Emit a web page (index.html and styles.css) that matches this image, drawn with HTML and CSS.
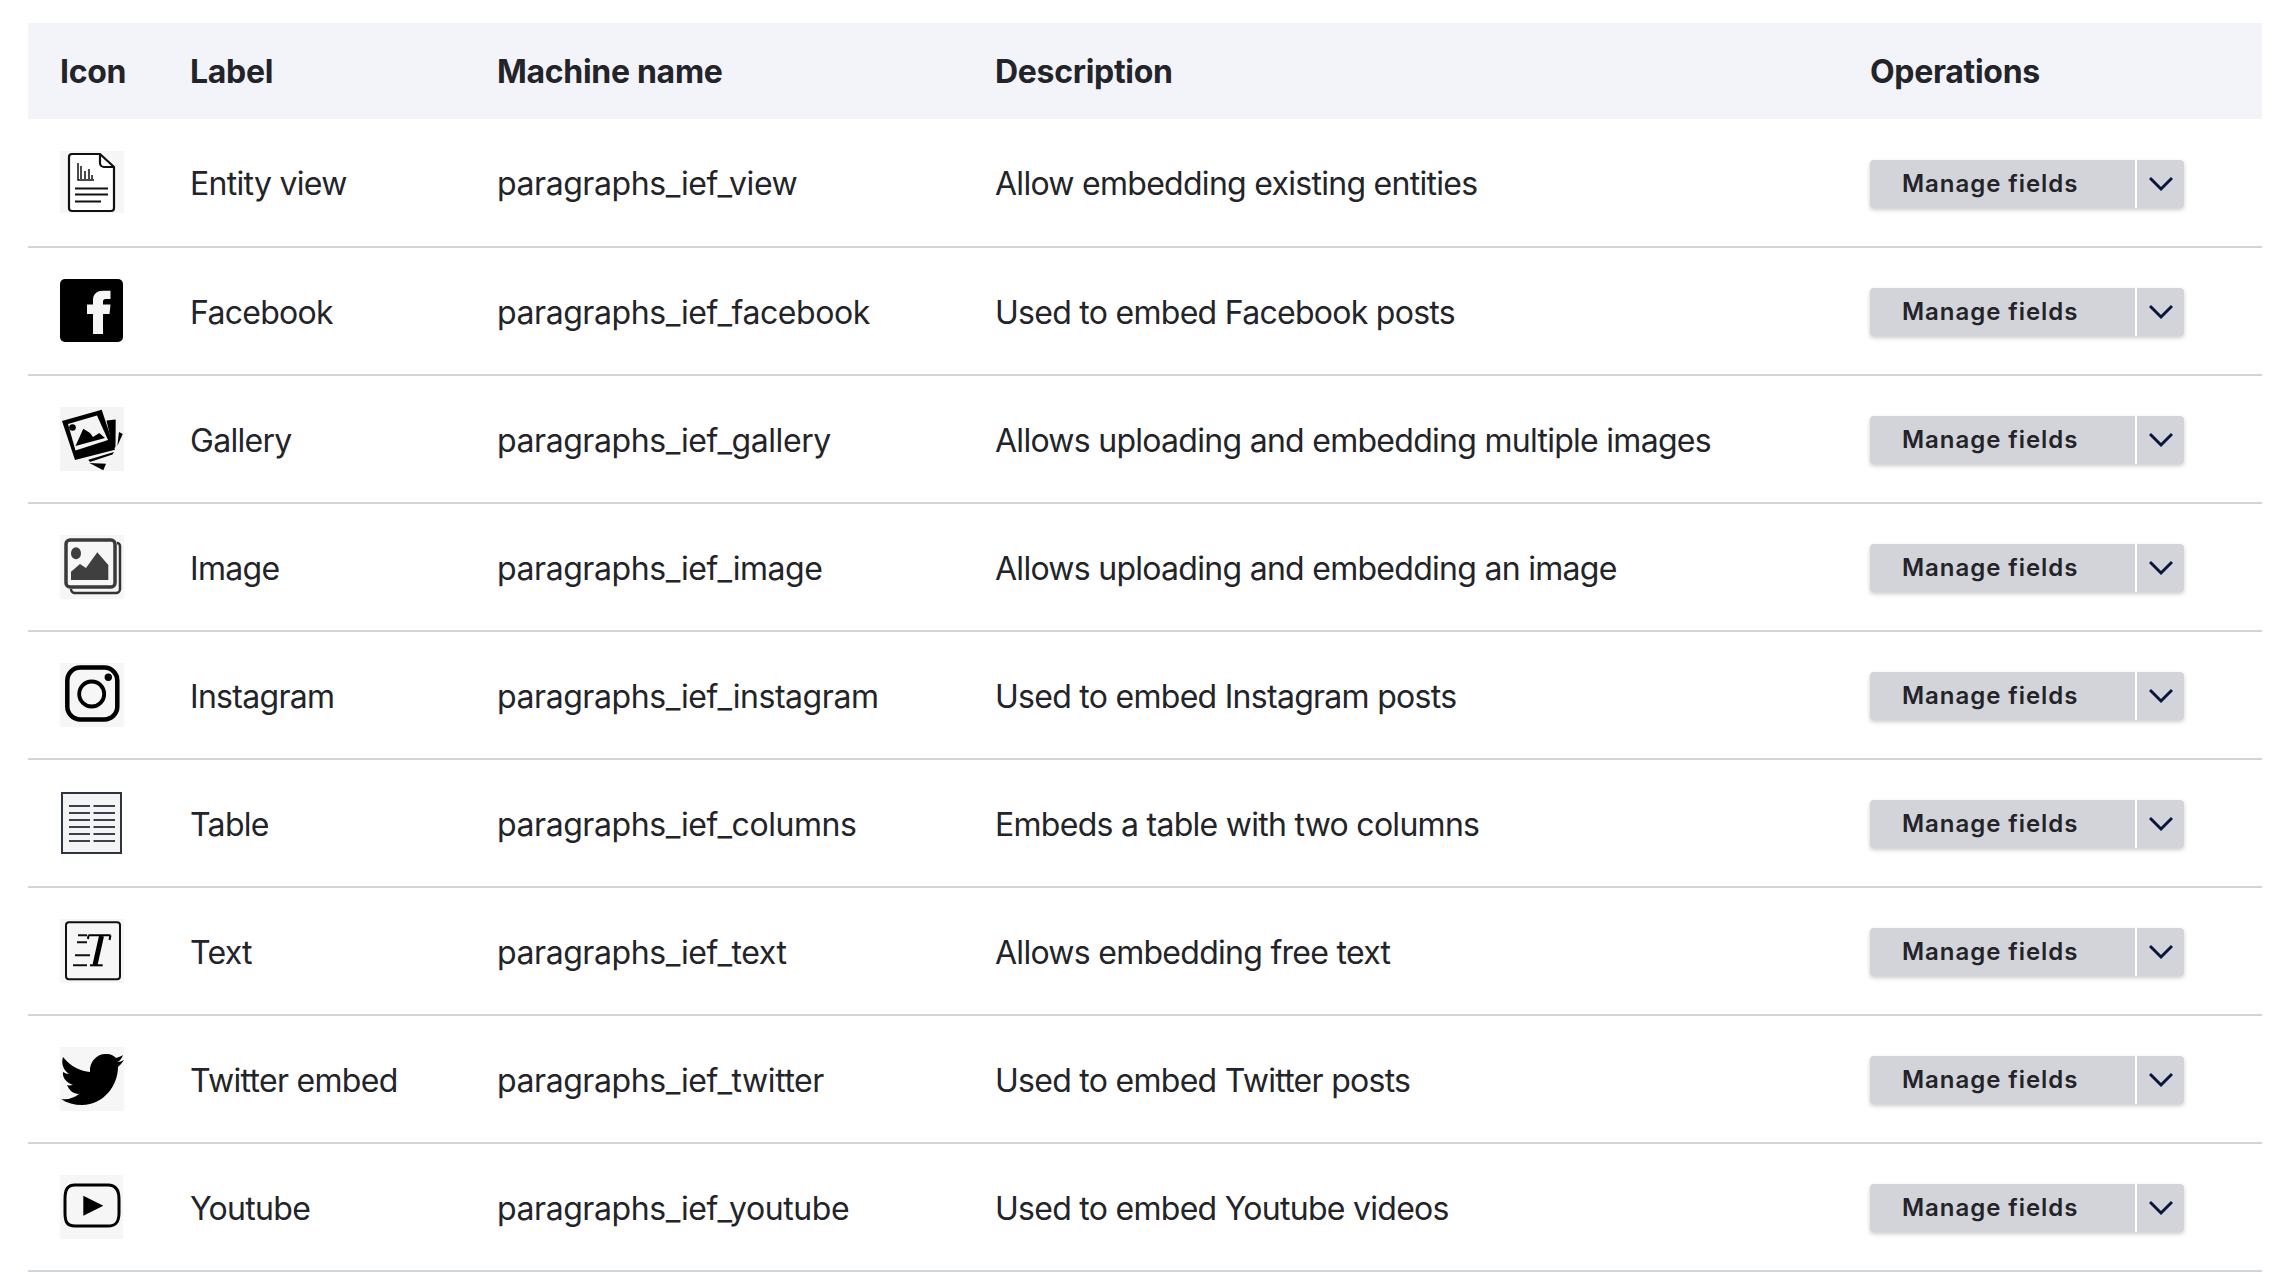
FILE: index.html
```html
<!DOCTYPE html>
<html lang="en">
<head>
<meta charset="utf-8">
<title>Paragraph types</title>
<link rel="stylesheet" href="styles.css">
</head>
<body>
<table class="types">
<thead>
<tr><th class="c-icon">Icon</th><th class="c-label">Label</th><th class="c-machine">Machine name</th><th class="c-desc">Description</th><th class="c-ops">Operations</th></tr>
</thead>
<tbody>
<tr>
<td class="c-icon"><svg class="ico" viewBox="0 0 64 64"><rect width="64" height="62" fill="#f6f6f6"/><path d="M12 3H40L54 16V57a3 3 0 0 1-3 3H12a3 3 0 0 1-3-3V6a3 3 0 0 1 3-3Z" fill="#fff" stroke="#111" stroke-width="2.200"/><path d="M40 3V12a4 4 0 0 0 4 4H54" fill="none" stroke="#111" stroke-width="2.200"/><path d="M18 12V29H34M21 15V28M25 20V28M29 18V28M32 24V28" fill="none" stroke="#111" stroke-width="1.500"/><path d="M15 37.500H48M15 43.500H48M15 50.500H41" stroke="#111" stroke-width="2"/></svg></td>
<td class="t-label">Entity view</td><td class="t-machine">paragraphs_ief_view</td><td class="t-desc">Allow embedding existing entities</td>
<td class="c-ops"><div class="btn"><a class="btn-main">Manage fields</a><span class="btn-more"><svg class="chev" viewBox="0 0 24 16"><path d="M1 2L12 13L23 2" fill="none" stroke="#0a1540" stroke-width="3"/></svg></span></div></td>
</tr>
<tr>
<td class="c-icon"><svg class="ico" viewBox="0 0 64 64"><rect width="63" height="63" rx="5" fill="#000"/><path d="M33 55V35H27V25.500H33V21C33 15 37 11.700 43 11.700H50.500V20H45.500C44 20 43 21 43 22.500V25.500H50.500L49.500 35H43V55Z" fill="#f6f6f6"/></svg></td>
<td class="t-label">Facebook</td><td class="t-machine">paragraphs_ief_facebook</td><td class="t-desc">Used to embed Facebook posts</td>
<td class="c-ops"><div class="btn"><a class="btn-main">Manage fields</a><span class="btn-more"><svg class="chev" viewBox="0 0 24 16"><path d="M1 2L12 13L23 2" fill="none" stroke="#0a1540" stroke-width="3"/></svg></span></div></td>
</tr>
<tr>
<td class="c-icon"><svg class="ico" viewBox="0 0 64 64"><rect width="64" height="64" fill="#f4f4f4"/><path d="M46.500 13.500L55.700 12.500L55.500 40L53 42Z" fill="#000"/><path d="M59 25L62.700 27L57.300 39Z" fill="#000"/><path d="M28.300 52.700L54 45L52.500 47.500L30 55Z" fill="#000"/><path d="M29.300 56L46 56.700L43.300 63.300Z" fill="#000"/><path d="M2 14L41.700 2.700L55 42.700L15 53Z" fill="#000"/><path d="M8 17L37 8.500L48 33L15.500 43.500Z" fill="#f4f4f4"/><path d="M15.500 39L23.300 21.700L30 26L33 30L39.300 26L45 31Z" fill="#000"/><circle cx="12.500" cy="20.500" r="3.300" fill="#000"/></svg></td>
<td class="t-label">Gallery</td><td class="t-machine">paragraphs_ief_gallery</td><td class="t-desc">Allows uploading and embedding multiple images</td>
<td class="c-ops"><div class="btn"><a class="btn-main">Manage fields</a><span class="btn-more"><svg class="chev" viewBox="0 0 24 16"><path d="M1 2L12 13L23 2" fill="none" stroke="#0a1540" stroke-width="3"/></svg></span></div></td>
</tr>
<tr>
<td class="c-icon"><svg class="ico" viewBox="0 0 64 64"><rect width="64" height="64" fill="#f6f6f6"/><path d="M57 8a3 3 0 0 1 3 3V54a4 4 0 0 1-4 4H15a4 4 0 0 1-4-4" fill="none" stroke="#333" stroke-width="2.500"/><rect x="6" y="5" width="49" height="47" rx="4" fill="#f6f6f6" stroke="#3a3a3a" stroke-width="3.500"/><path d="M11 45V36.700L20 29L26 33L37.300 17.300L48.300 30V45Z" fill="#3f3f3f"/><ellipse cx="16" cy="18.300" rx="5" ry="6" fill="#3f3f3f"/></svg></td>
<td class="t-label">Image</td><td class="t-machine">paragraphs_ief_image</td><td class="t-desc">Allows uploading and embedding an image</td>
<td class="c-ops"><div class="btn"><a class="btn-main">Manage fields</a><span class="btn-more"><svg class="chev" viewBox="0 0 24 16"><path d="M1 2L12 13L23 2" fill="none" stroke="#0a1540" stroke-width="3"/></svg></span></div></td>
</tr>
<tr>
<td class="c-icon"><svg class="ico" viewBox="0 0 64 64"><rect width="64" height="64" fill="#f6f6f6"/><rect x="7.300" y="4.500" width="50" height="52" rx="13" fill="none" stroke="#000" stroke-width="4.500"/><circle cx="31.700" cy="31" r="12.500" fill="none" stroke="#000" stroke-width="3.800"/><circle cx="48.300" cy="14.300" r="3.700" fill="#000"/></svg></td>
<td class="t-label">Instagram</td><td class="t-machine">paragraphs_ief_instagram</td><td class="t-desc">Used to embed Instagram posts</td>
<td class="c-ops"><div class="btn"><a class="btn-main">Manage fields</a><span class="btn-more"><svg class="chev" viewBox="0 0 24 16"><path d="M1 2L12 13L23 2" fill="none" stroke="#0a1540" stroke-width="3"/></svg></span></div></td>
</tr>
<tr>
<td class="c-icon"><svg class="ico" viewBox="0 0 64 64"><rect x="2" y="2" width="59" height="60" fill="#f4f4f4" stroke="#2f3442" stroke-width="2"/><path d="M9 15H30M33.500 15H55M9 22H30M33.500 22H55M9 29H30M33.500 29H55M9 36H30M33.500 36H55M9 43H30M33.500 43H55M9 50H30M33.500 50H55" stroke="#3c4150" stroke-width="2"/></svg></td>
<td class="t-label">Table</td><td class="t-machine">paragraphs_ief_columns</td><td class="t-desc">Embeds a table with two columns</td>
<td class="c-ops"><div class="btn"><a class="btn-main">Manage fields</a><span class="btn-more"><svg class="chev" viewBox="0 0 24 16"><path d="M1 2L12 13L23 2" fill="none" stroke="#0a1540" stroke-width="3"/></svg></span></div></td>
</tr>
<tr>
<td class="c-icon"><svg class="ico" viewBox="0 0 64 64"><rect width="64" height="64" fill="#f6f6f6"/><rect x="6" y="3.300" width="54" height="57" rx="3" fill="#f6f6f6" stroke="#111" stroke-width="2"/><path d="M28.500 16.300H50.500M28.500 16.300L28 20M50.500 16.300L49.500 21" fill="none" stroke="#000" stroke-width="2"/><path d="M41.500 17L35 46" fill="none" stroke="#000" stroke-width="5"/><path d="M30 46.300H42.700" stroke="#000" stroke-width="2"/><path d="M18 16.300H27M17 23.300H27M15 36.300H30M13 46.300H27" stroke="#111" stroke-width="2"/></svg></td>
<td class="t-label">Text</td><td class="t-machine">paragraphs_ief_text</td><td class="t-desc">Allows embedding free text</td>
<td class="c-ops"><div class="btn"><a class="btn-main">Manage fields</a><span class="btn-more"><svg class="chev" viewBox="0 0 24 16"><path d="M1 2L12 13L23 2" fill="none" stroke="#0a1540" stroke-width="3"/></svg></span></div></td>
</tr>
<tr>
<td class="c-icon"><svg class="ico" viewBox="0 0 64 64"><rect width="64" height="64" fill="#f6f6f6"/><path d="M3 10C11 20 21 24 30 25C29 14 38 6 47 7C51 7 54 9 56 11C59 10 62 9 63 8C62 11 60 14 57 15C60 15 62 14 64 13C62 16 60 18 58 20C58 38 44 58 22 58C14 58 7 56 1 52C8 53 14 51 19 47C13 47 9 43 7 38C9 39 11 38 13 38C7 36 2 31 3 25C5 26 7 27 9 27C3 23 1 16 3 10Z" fill="#000"/></svg></td>
<td class="t-label">Twitter embed</td><td class="t-machine">paragraphs_ief_twitter</td><td class="t-desc">Used to embed Twitter posts</td>
<td class="c-ops"><div class="btn"><a class="btn-main">Manage fields</a><span class="btn-more"><svg class="chev" viewBox="0 0 24 16"><path d="M1 2L12 13L23 2" fill="none" stroke="#0a1540" stroke-width="3"/></svg></span></div></td>
</tr>
<tr>
<td class="c-icon"><svg class="ico" viewBox="0 0 64 64"><rect width="63" height="64" fill="#f6f6f6"/><path d="M15 10H48C56 10 59 15 59 24V38C59 47 56 51 48 51H15C7 51 5 47 5 38V24C5 15 7 10 15 10Z" fill="none" stroke="#000" stroke-width="3"/><path d="M23.300 20.700V40.700L43.300 30.700Z" fill="#000"/></svg></td>
<td class="t-label">Youtube</td><td class="t-machine">paragraphs_ief_youtube</td><td class="t-desc">Used to embed Youtube videos</td>
<td class="c-ops"><div class="btn"><a class="btn-main">Manage fields</a><span class="btn-more"><svg class="chev" viewBox="0 0 24 16"><path d="M1 2L12 13L23 2" fill="none" stroke="#0a1540" stroke-width="3"/></svg></span></div></td>
</tr>
</tbody>
</table>
</body>
</html>
```
FILE: styles.css
```css
html, body { margin: 0; padding: 0; background: #fff; }
body { padding: 23px 34px 0 28px; font-family: Inter, "Liberation Sans", sans-serif; color: #232429; font-size: 32px; overflow: hidden; height: 1249px; }
.types { width: 2234px; border-collapse: separate; border-spacing: 0; table-layout: fixed; }
th { background: #f3f4f9; height: 96px; padding: 0 0 0 32px; text-align: left; font-weight: 700; font-size: 32px; letter-spacing: -0.3px; box-sizing: border-box; }
td { height: 128px; padding: 2px 0 0 32px; border-bottom: 2px solid #d3d4d9; box-sizing: border-box; font-size: 32px; }
tbody tr:first-child td { height: 129px; }
tbody tr:first-child td.c-ops { padding-top: 3px; }
td.c-icon { padding-top: 0; }
.c-icon { width: 130px; }
.c-label { width: 307px; }
.c-machine { width: 498px; }
.c-desc { width: 875px; }
.t-label { letter-spacing: -0.7px; }
.t-machine { letter-spacing: -0.43px; }
.t-desc { letter-spacing: -0.72px; }
.ico { display: block; width: 64px; height: 64px; }
.btn { display: flex; width: 314px; height: 48px; background: #d3d4d9; border-radius: 4px; box-shadow: 0 2px 4px rgba(0,0,0,.2); }
.btn-main { width: 265px; padding-left: 32px; box-sizing: border-box; font-size: 24px; font-weight: 600; letter-spacing: 0.95px; line-height: 48px; }
.btn-more { flex: 1; border-left: 2px solid #fff; display: flex; align-items: center; justify-content: center; }
.chev { width: 24px; height: 16px; }
```
